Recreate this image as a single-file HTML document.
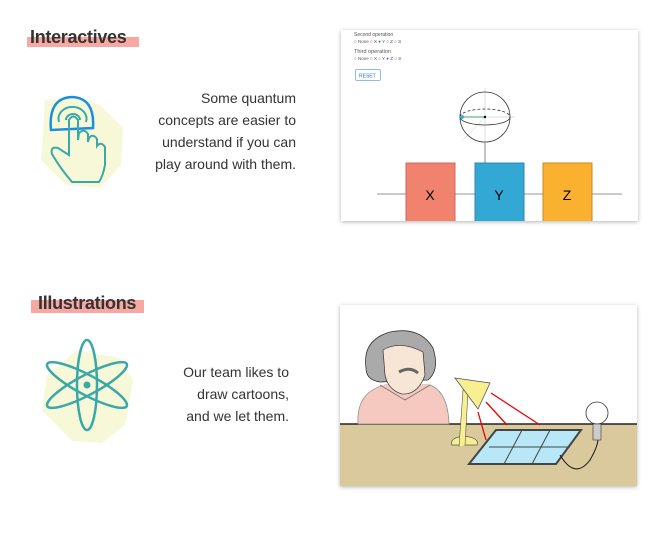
<!DOCTYPE html>
<html><head><meta charset="utf-8"><style>
body{margin:0;width:668px;height:539px;background:#fff;position:relative;overflow:hidden;font-family:"Liberation Sans",sans-serif}
.hl{position:absolute;background:#f7a8a2;height:10px}
.h{position:absolute;font-weight:bold;font-size:18px;color:#333;letter-spacing:-0.3px}
.t{position:absolute;text-align:right;font-size:14px;line-height:22px;color:#333}
.card{position:absolute;background:#fff;box-shadow:0 1px 4px rgba(0,0,0,.3);overflow:hidden}
</style></head><body>
<div class="hl" style="left:27px;top:37px;width:112px"></div>
<div class="h" style="left:30px;top:27px">Interactives</div>
<div class="t" style="left:130px;top:87px;width:166px">Some quantum<br>concepts are easier to<br>understand if you can<br>play around with them.</div>
<svg style="position:absolute;left:38px;top:90px" width="90" height="100" viewBox="38 90 90 100">
<path d="M45 100 L75 97 L100 105 L123 128 L121 165 L100 188 L66 185 L41 160 Z" fill="#f6f8d8"/>
<path d="M51 130 Q48 98 72 97 Q95 98 93 128 Z" fill="none" stroke="#1a8fe0" stroke-width="2.5"/>
<path d="M59 122 A14 12 0 1 1 86 122 M66 120 A7 6 0 1 1 80 120" fill="none" stroke="#3aa8a8" stroke-width="2"/>
<path d="M69 155 L69 120 Q73 113 78 120 L78 140 L79 133 Q84 128 88 134 L88 142 L89 138 Q93 133 97 139 L97 146 Q101 141 105 147 L105 165 Q103 176 99 182 L72 182 Q60 168 52 154 Q50 146 58 148 Z" fill="none" stroke="#3aa8a8" stroke-width="2"/>
</svg>
<div class="card" style="left:341px;top:30px;width:297px;height:191px">
<svg width="297" height="191" viewBox="341 30 297 191" font-family="Liberation Sans" >
<text x="354" y="36" font-size="5" fill="#555">Second operation</text>
<g font-size="4.5" fill="#555"><text x="354" y="43">○ None ○ X <tspan fill="#1a73e8">●</tspan> Y ○ Z ○ S</text>
<text x="354" y="53" font-size="5.5">Third operation</text>
<text x="354" y="60">○ None ○ X ○ Y <tspan fill="#1a73e8">●</tspan> Z ○ S</text></g>
<rect x="355.5" y="69.5" width="25" height="11" rx="1.5" fill="#fff" stroke="#8bbcf0"/>
<text x="359" y="77.5" font-size="5" fill="#1a73e8">RESET</text>
<line x1="377" y1="194" x2="622" y2="194" stroke="#aaa" stroke-width="1.2"/>
<line x1="485" y1="88" x2="485" y2="142" stroke="#bbb" stroke-width=".5"/>
<line x1="460" y1="117" x2="515" y2="117" stroke="#bbb" stroke-width=".5"/>
<line x1="485" y1="117" x2="463" y2="140" stroke="#bbb" stroke-width=".5"/>
<circle cx="485" cy="117" r="25" fill="none" stroke="#333" stroke-width=".8"/>
<path d="M460 117 A25 8 0 0 1 510 117" fill="none" stroke="#333" stroke-width=".8" stroke-dasharray="3 2"/>
<path d="M460 117 A25 8 0 0 0 510 117" fill="none" stroke="#333" stroke-width=".8"/>
<line x1="462" y1="117" x2="485" y2="117" stroke="#3aa860" stroke-width="1"/>
<circle cx="462" cy="117" r="2" fill="#3ab0e0"/><circle cx="485" cy="117" r="1.2" fill="#000"/>
<line x1="485" y1="142" x2="485" y2="163" stroke="#888" stroke-width="1"/>
<rect x="406" y="163" width="49" height="60" fill="#f0826e" stroke="#c66"/>
<rect x="475" y="163" width="49" height="60" fill="#33a8d4" stroke="#2a88b0"/>
<rect x="543" y="163" width="49" height="60" fill="#fbb130" stroke="#c98a20"/>
<text x="430" y="200" font-size="14" text-anchor="middle">X</text>
<text x="499" y="200" font-size="14" text-anchor="middle">Y</text>
<text x="567" y="200" font-size="14" text-anchor="middle">Z</text>
</svg></div>
<div class="hl" style="left:31px;top:300px;width:113px;height:13px"></div>
<div class="h" style="left:38px;top:293px">Illustrations</div>
<div class="t" style="left:150px;top:361px;width:139px">Our team likes to<br>draw cartoons,<br>and we let them.</div>
<svg style="position:absolute;left:37px;top:335px" width="100" height="115" viewBox="0 0 100 115">
<path d="M40 15 L82 23 L96 45 L88 90 L65 108 L35 106 L5 75 L10 40 Z" fill="#f6f8d8"/>
<g fill="none" stroke="#3aa8a8" stroke-width="2.5">
<ellipse cx="50" cy="50" rx="10" ry="45"/>
<ellipse cx="50" cy="50" rx="10" ry="45" transform="rotate(62 50 50)"/>
<ellipse cx="50" cy="50" rx="10" ry="45" transform="rotate(-62 50 50)"/></g>
<circle cx="50" cy="50" r="3.5" fill="#3aa8a8"/>
</svg>
<div class="card" style="left:340px;top:305px;width:297px;height:181px">
<svg width="297" height="181" viewBox="340 305 297 181">
<rect x="340" y="424" width="297" height="62" fill="#d9c99c"/>
<line x1="340" y1="424" x2="637" y2="424" stroke="#222" stroke-width="1.5"/>
<path d="M358 424 Q356 392 385 385 L430 385 Q448 392 449 424 Z" fill="#f5c8c0" stroke="#888" stroke-width=".7"/>
<path d="M380 385 L405 400 L430 385" fill="#f5c8c0" stroke="#555" stroke-width=".7"/>
<path d="M366 368 Q362 340 390 332 Q420 326 433 348 Q440 370 428 380 L380 382 Q366 380 366 368 Z" fill="#aaa" stroke="#333" stroke-width=".8"/>
<path d="M383 350 Q400 340 423 352 L425 375 Q418 395 402 394 Q388 390 385 375 Z" fill="#f7e6d6" stroke="#333" stroke-width=".7"/>
<path d="M399 372 Q410 366 418 373" stroke="#666" stroke-width="3" fill="none"/>
<path d="M452 445 Q449 438 464 436 Q480 438 477 445 Z" fill="#f8f090" stroke="#555" stroke-width=".7"/>
<path d="M459 447 L463 390 L468 392 L465 445" fill="#f8f090" stroke="#555" stroke-width=".6"/>
<path d="M455 378 L490 383 L478 409 Z" fill="#f8f090" stroke="#555" stroke-width=".8"/>
<g stroke="#e00" stroke-width="1.3"><line x1="491" y1="393" x2="540" y2="425"/><line x1="486" y1="402" x2="507" y2="425"/><line x1="478" y1="412" x2="486" y2="440"/></g>
<path d="M469 464 L496 430 L581 430 L556 464 Z" fill="#b8e8f8" stroke="#444" stroke-width="2"/>
<path d="M489 447 L570 447 M522 430 L504 464 M550 430 L532 464" stroke="#444" stroke-width="1"/>
<path d="M560 455 Q575 480 590 460 Q597 448 598 440" fill="none" stroke="#111" stroke-width="1"/>
<circle cx="597" cy="413" r="11" fill="#fff" stroke="#333" stroke-width=".8"/>
<rect x="593" y="424" width="8" height="16" fill="#ccc" stroke="#333" stroke-width=".6"/>
</svg></div>
</body></html>
